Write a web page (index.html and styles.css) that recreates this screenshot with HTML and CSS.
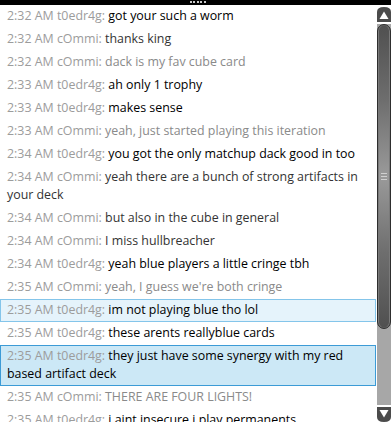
FILE: index.html
```html
<!DOCTYPE html>
<html lang="en">
<head>
    <meta charset="UTF-8">
    <title>Chat</title>
    <link rel="stylesheet" href="styles.css">
</head>
<body>
    <div class="chat-window">
        <div class="top-bar">
            <span class="grip"><i></i><i></i><i></i><i></i><i></i></span>
        </div>
        <div class="chat-body">
            <ul class="messages">
                <li class="msg"><span class="meta">2:32 AM t0edr4g:</span> got your such a worm</li>
                <li class="msg other"><span class="meta">2:32 AM cOmmi:</span> thanks king</li>
                <li class="msg other dim"><span class="meta">2:32 AM cOmmi:</span> dack is my fav cube card</li>
                <li class="msg"><span class="meta">2:33 AM t0edr4g:</span> ah only 1 trophy</li>
                <li class="msg"><span class="meta">2:33 AM t0edr4g:</span> makes sense</li>
                <li class="msg other dim"><span class="meta">2:33 AM cOmmi:</span> yeah, just started playing this iteration</li>
                <li class="msg"><span class="meta">2:34 AM t0edr4g:</span> you got the only matchup dack good in too</li>
                <li class="msg other"><span class="meta">2:34 AM cOmmi:</span> yeah there are a bunch of strong artifacts in your deck</li>
                <li class="msg other"><span class="meta">2:34 AM cOmmi:</span> but also in the cube in general</li>
                <li class="msg other"><span class="meta">2:34 AM cOmmi:</span> I miss hullbreacher</li>
                <li class="msg"><span class="meta">2:34 AM t0edr4g:</span> yeah blue players a little cringe tbh</li>
                <li class="msg other dim"><span class="meta">2:35 AM cOmmi:</span> yeah, I guess we're both cringe</li>
                <li class="msg hover"><span class="meta">2:35 AM t0edr4g:</span> im not playing blue tho lol</li>
                <li class="msg"><span class="meta">2:35 AM t0edr4g:</span> these arents reallyblue cards</li>
                <li class="msg selected"><span class="meta">2:35 AM t0edr4g:</span> they just have some synergy with my red based artifact deck</li>
                <li class="msg other dim"><span class="meta">2:35 AM cOmmi:</span> THERE ARE FOUR LIGHTS!</li>
                <li class="msg"><span class="meta">2:35 AM t0edr4g:</span> i aint insecure i play permanents</li>
            </ul>
            <div class="scrollbar">
                <svg class="arrow" width="14" height="15" viewBox="0 0 14 15">
                    <path d="M0 15 V5 Q0 0 7 0 Q14 0 14 5 V15 Z" fill="#4b4b4b"/>
                    <path d="M2.5 12 L7 4.5 L11.5 12 Z" fill="#ffffff"/>
                </svg>
                <div class="track">
                    <div class="thumb">
                        <span class="thumb-grip"><i></i><i></i><i></i></span>
                    </div>
                </div>
                <svg class="arrow" width="14" height="15" viewBox="0 0 14 15">
                    <path d="M0 0 V10 Q0 15 7 15 Q14 15 14 10 V0 Z" fill="#4b4b4b"/>
                    <path d="M2.5 3 L7 10.5 L11.5 3 Z" fill="#ffffff"/>
                </svg>
            </div>
        </div>
    </div>
</body>
</html>
```

FILE: styles.css
```css
:root {
    --meta-color: #9c9c9c;
    --text-dark: #000000;
    --text-other: #333333;
    --text-dim: #8a8a8a;
    --hover-bg: #e5f3fb;
    --hover-border: #84c5ea;
    --selected-bg: #cce8f6;
    --selected-border: #3c9bd6;
}

body {
    margin: 0;
    font-family: "Open Sans", "Noto Sans", sans-serif;
    font-size: 12.4px;
    background: #ffffff;
}

.chat-window {
    width: 391px;
    height: 422px;
    overflow: hidden;
    display: flex;
    flex-direction: column;
}

.top-bar {
    height: 5px;
    background: #000000;
    display: flex;
    justify-content: center;
    flex-shrink: 0;
}

.grip {
    display: flex;
    gap: 1.5px;
    padding-top: 1px;
    margin-left: 4px;
}

.grip i {
    width: 2px;
    height: 2px;
    background: #c8c8c8;
}

.chat-body {
    flex: 1;
    display: flex;
    gap: 1px;
    min-height: 0;
}

.messages {
    list-style: none;
    margin: 0;
    padding: 0;
    width: 376px;
    overflow: hidden;
}

.msg {
    border: 1px solid transparent;
    padding: 1px 6px 2px;
    line-height: 18px;
    color: var(--text-dark);
}

.msg.other {
    color: var(--text-other);
}

.msg.dim {
    color: var(--text-dim);
}

.meta {
    color: var(--meta-color);
}

.msg.hover {
    background: var(--hover-bg);
    border-color: var(--hover-border);
}

.msg.selected {
    background: var(--selected-bg);
    border-color: var(--selected-border);
}

.scrollbar {
    width: 14px;
    display: flex;
    flex-direction: column;
    padding-top: 2px;
}

.arrow {
    display: block;
    flex-shrink: 0;
}

.track {
    flex: 1;
    background: #a7a7a7;
    margin: 2px 0;
}

.thumb {
    height: 305px;
    box-sizing: border-box;
    border: 1px solid #2e2e2e;
    border-radius: 7px;
    background: linear-gradient(to bottom, #505050 0%, #6e6e6e 25%, #9a9a9a 50%, #6e6e6e 75%, #505050 100%);
    box-shadow: inset 1px 0 0 #7a7a7a, inset -1px 0 0 #7a7a7a;
    display: flex;
    flex-direction: column;
    justify-content: center;
    align-items: center;
}

.thumb-grip {
    display: flex;
    flex-direction: column;
    gap: 2px;
}

.thumb-grip i {
    width: 6px;
    height: 1px;
    background: #d0d0d0;
}
```
